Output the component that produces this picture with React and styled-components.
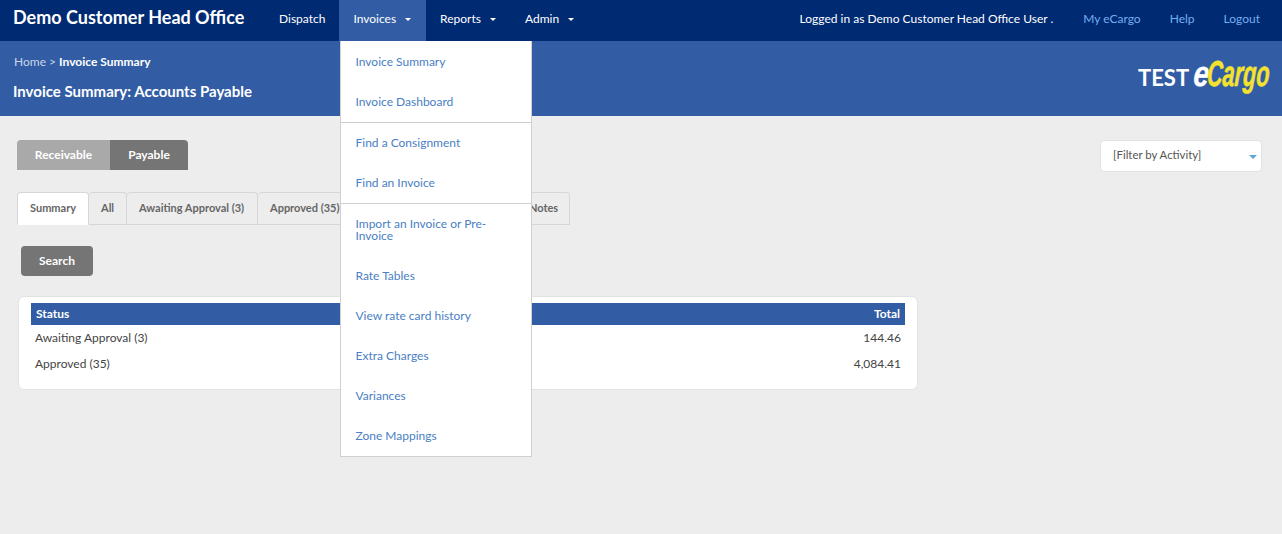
import React from 'react';
import styled, { createGlobalStyle } from 'styled-components';

const Global = createGlobalStyle`
html, body { margin: 0; padding: 0; background: #ededed; }
body { font-family: Lato, "Open Sans", sans-serif; font-size: 12px; color: #444; overflow: hidden; }
a { text-decoration: none; }
* { box-sizing: border-box; }
`;

const Page = styled.div`
position: relative;
height: 534px;
width: 1282px;
`;

const TopNav = styled.nav`
display: flex;
align-items: stretch;
height: 41px;
background: #002a72;
color: #fff;
`;

const Brand = styled.div`
font-size: 18px;
font-weight: 700;
line-height: 34px;
padding-left: 13px;
width: 265px;
color: #fff;
`;

const NavItem = styled.a`
display: flex;
align-items: center;
gap: 9px;
padding: 0 ${p => (p.$caret ? 15 : 14)}px 4px 14px;
height: 41px;
font-size: 12px;
color: #fff;
background: ${p => (p.$active ? '#325da4' : 'transparent')};
`;

const Caret = styled.span`
width: 0;
height: 0;
border-left: 3.5px solid transparent;
border-right: 3.5px solid transparent;
border-top: 3.5px solid #fff;
margin-top: 2px;
`;

const NavRight = styled.div`
margin-left: auto;
display: flex;
align-items: center;
padding: 0 22px 4px 0;
font-size: 12px;
`;

const LoggedIn = styled.span`
color: #fff;
margin-right: 30px;
`;

const NavLink = styled.a`
color: #75aef0;
margin-left: ${p => p.$gap || 0}px;
`;

const SubHeader = styled.header`
display: flex;
justify-content: space-between;
height: 75px;
background: #325da4;
padding: 14px 12px 0 13px;
`;

const Crumbs = styled.div`
font-size: 12px;
line-height: 14px;
color: #c9d6ea;
padding-left: 1px;
strong { color: #fff; font-weight: 700; }
`;

const PageTitle = styled.h1`
margin: 13px 0 0;
font-size: 15px;
line-height: 18px;
font-weight: 700;
color: #fff;
`;

const Logo = styled.div`
display: flex;
align-items: baseline;
height: 45px;
width: 132px;
margin-top: -1px;
white-space: nowrap;
`;

const LogoTest = styled.span`
font-size: 22px;
font-weight: 700;
color: #fff;
width: 54px;
`;

const LogoE = styled.span`
display: inline-block;
width: 14px;
font-family: "Liberation Sans", sans-serif;
font-size: 36px;
line-height: 40px;
font-weight: 700;
font-style: italic;
color: #fff;
-webkit-text-stroke: 0.4px #fff;
transform: scaleX(0.78) skewX(-6deg);
transform-origin: left bottom;
`;

const LogoCargo = styled.span`
display: inline-block;
width: 64px;
font-family: "Liberation Sans", sans-serif;
font-size: 36px;
line-height: 40px;
font-weight: 700;
font-style: italic;
color: #f4e22e;
-webkit-text-stroke: 0.6px #f4e22e;
transform: scaleX(0.6) skewX(-6deg);
transform-origin: left bottom;
`;

const Content = styled.main`
padding: 24px 20px 0 17px;
`;

const ToolRow = styled.div`
display: flex;
justify-content: space-between;
align-items: flex-start;
`;

const Toggle = styled.div`
display: flex;
`;

const ToggleBtn = styled.a`
display: flex;
align-items: center;
justify-content: center;
width: ${p => p.$w}px;
height: 30px;
padding-bottom: 1px;
font-size: 12px;
font-weight: 700;
color: #fff;
background: ${p => (p.$on ? '#757575' : '#a9a9a9')};
border-radius: ${p => (p.$on ? '0 4px 0 0' : '4px 0 0 0')};
`;

const FilterSelect = styled.div`
position: relative;
display: flex;
align-items: center;
width: 162px;
height: 32px;
padding: 0 0 3px 12px;
font-size: 11.4px;
color: #555;
background: #fff;
border: 1px solid #e2e2e2;
border-radius: 4px;
&::after {
  content: '';
  position: absolute;
  right: 4px;
  top: 14px;
  border-left: 4px solid transparent;
  border-right: 4px solid transparent;
  border-top: 4px solid #5aa7d6;
}
`;

const Tabs = styled.div`
display: flex;
margin-top: 20px;
height: 33px;
`;

const Tab = styled.a`
display: flex;
align-items: center;
width: ${p => p.$w}px;
padding: 0 0 2px 12px;
font-size: 11px;
font-weight: 700;
color: #666;
white-space: nowrap;
background: ${p => (p.$on ? '#fff' : 'transparent')};
border: 1px solid #d6d6d6;
border-left-width: ${p => (p.$first ? 1 : 0)}px;
border-bottom-color: ${p => (p.$on ? '#fff' : '#d6d6d6')};
border-radius: 4px 4px 0 0;
`;

const SearchBtn = styled.a`
display: flex;
align-items: center;
justify-content: center;
width: 72px;
height: 30px;
margin: 21px 0 0 4px;
padding-bottom: 1px;
font-size: 12px;
font-weight: 700;
color: #fff;
background: #757575;
border-radius: 4px;
`;

const Card = styled.section`
width: 900px;
height: 94px;
margin: 20px 0 0 1px;
padding: 6px 12px 0;
background: #fff;
border: 1px solid #e2e2e2;
border-radius: 6px;
`;

const HeadRow = styled.div`
display: flex;
justify-content: space-between;
align-items: center;
height: 22px;
padding: 0 5px 1px;
font-size: 12px;
font-weight: 700;
color: #fff;
background: #325da4;
`;

const DataRow = styled.div`
display: flex;
justify-content: space-between;
align-items: center;
height: 26px;
padding: 0 4px 1px;
font-size: 12px;
color: #444;
`;

const Menu = styled.ul`
position: absolute;
left: 340px;
top: 41px;
width: 192px;
height: 416px;
margin: 0;
padding: 1px 0 0;
list-style: none;
background: #fff;
border: 1px solid #d0d0d0;
border-top: 0;
`;

const MenuItem = styled.li`
display: flex;
align-items: center;
height: ${p => p.$h || 40}px;
padding: 0 30px 0 14.5px;
font-size: 12px;
line-height: 12px;
color: #4a80c4;
`;

const MenuRule = styled.li`
height: 1px;
background: #cfcfcf;
`;

const menuGroups = [
  [{ label: 'Invoice Summary' }, { label: 'Invoice Dashboard' }],
  [{ label: 'Find a Consignment' }, { label: 'Find an Invoice' }],
  [
    { label: 'Import an Invoice or Pre-Invoice', h: 52 },
    { label: 'Rate Tables' },
    { label: 'View rate card history' },
    { label: 'Extra Charges' },
    { label: 'Variances' },
    { label: 'Zone Mappings' },
  ],
];

export default function App() {
  return (
    <Page>
      <Global />
      <TopNav>
        <Brand>Demo Customer Head Office</Brand>
        <NavItem>Dispatch</NavItem>
        <NavItem $active $caret>Invoices <Caret /></NavItem>
        <NavItem $caret>Reports <Caret /></NavItem>
        <NavItem $caret>Admin <Caret /></NavItem>
        <NavRight>
          <LoggedIn>Logged in as Demo Customer Head Office User .</LoggedIn>
          <NavLink>My eCargo</NavLink>
          <NavLink $gap={29}>Help</NavLink>
          <NavLink $gap={29}>Logout</NavLink>
        </NavRight>
      </TopNav>
      <SubHeader>
        <div>
          <Crumbs>Home &gt; <strong>Invoice Summary</strong></Crumbs>
          <PageTitle>Invoice Summary: Accounts Payable</PageTitle>
        </div>
        <Logo>
          <LogoTest>TEST</LogoTest>
          <LogoE>e</LogoE>
          <LogoCargo>Cargo</LogoCargo>
        </Logo>
      </SubHeader>
      <Content>
        <ToolRow>
          <Toggle>
            <ToggleBtn $w={93}>Receivable</ToggleBtn>
            <ToggleBtn $w={78} $on>Payable</ToggleBtn>
          </Toggle>
          <FilterSelect>[Filter by Activity]</FilterSelect>
        </ToolRow>
        <Tabs>
          <Tab $w={72} $on $first>Summary</Tab>
          <Tab $w={38}>All</Tab>
          <Tab $w={131}>Awaiting Approval (3)</Tab>
          <Tab $w={94}>Approved (35)</Tab>
          <Tab $w={132}>Rejected</Tab>
          <Tab $w={86}>Credit Notes</Tab>
        </Tabs>
        <SearchBtn>Search</SearchBtn>
        <Card>
          <HeadRow><span>Status</span><span>Total</span></HeadRow>
          <DataRow><span>Awaiting Approval (3)</span><span>144.46</span></DataRow>
          <DataRow><span>Approved (35)</span><span>4,084.41</span></DataRow>
        </Card>
      </Content>
      <Menu>
        {menuGroups.map((group, i) => (
          <React.Fragment key={i}>
            {i > 0 && <MenuRule />}
            {group.map(item => <MenuItem key={item.label} $h={item.h}>{item.label}</MenuItem>)}
          </React.Fragment>
        ))}
      </Menu>
    </Page>
  );
}
